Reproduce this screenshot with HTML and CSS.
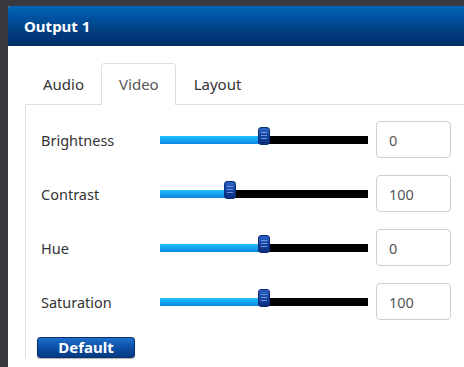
FILE: index.html
```html
<!DOCTYPE html>
<html lang="en">
<head>
    <meta charset="UTF-8">
    <meta name="viewport" content="width=device-width, initial-scale=1.0">
    <title>Output 1</title>
    <link rel="stylesheet" href="styles.css">
</head>
<body>
    <div class="dialog">
        <div class="header">Output 1</div>
        <div class="content">
            <ul class="tabs">
                <li class="tab">Audio</li>
                <li class="tab active">Video</li>
                <li class="tab">Layout</li>
            </ul>
            <div class="panel">
                <div class="row">
                    <label class="name">Brightness</label>
                    <div class="slider">
                        <div class="fill" style="width:104px;"></div>
                        <div class="thumb" style="left:104px;"><span></span><span></span><span></span></div>
                    </div>
                    <input class="value" type="text" value="0">
                </div>
                <div class="row">
                    <label class="name">Contrast</label>
                    <div class="slider">
                        <div class="fill" style="width:70px;"></div>
                        <div class="thumb" style="left:70px;"><span></span><span></span><span></span></div>
                    </div>
                    <input class="value" type="text" value="100">
                </div>
                <div class="row">
                    <label class="name">Hue</label>
                    <div class="slider">
                        <div class="fill" style="width:104px;"></div>
                        <div class="thumb" style="left:104px;"><span></span><span></span><span></span></div>
                    </div>
                    <input class="value" type="text" value="0">
                </div>
                <div class="row">
                    <label class="name">Saturation</label>
                    <div class="slider">
                        <div class="fill" style="width:104px;"></div>
                        <div class="thumb" style="left:104px;"><span></span><span></span><span></span></div>
                    </div>
                    <input class="value" type="text" value="100">
                </div>
                <button class="default">Default</button>
            </div>
        </div>
    </div>
</body>
</html>
```

FILE: styles.css
```css
html, body {
    height: 100%;
}
body {
    margin: 0;
    background-color: #393a3f;
    font-family: "Noto Sans", "Open Sans", sans-serif;
    overflow: hidden;
}
.dialog {
    margin: 6px 0 0 8px;
    height: calc(100% - 6px);
    background: white;
    border-radius: 3px 0 0 0;
    overflow: hidden;
}
.header {
    height: 40px;
    line-height: 40px;
    padding-left: 16px;
    color: white;
    font-size: 15px;
    font-weight: bold;
    background: linear-gradient(#0063b9, #013a7c 70%, #012f68);
}
.content {
    padding: 17px 0 0 17px;
}
.tabs {
    display: flex;
    list-style: none;
    margin: 0;
    padding: 0;
}
.tab {
    height: 40px;
    line-height: 40px;
    padding: 0 16px 0 17px;
    font-size: 15px;
    color: #333;
    border: 1px solid transparent;
    border-bottom: none;
    margin-bottom: -1px;
}
.tab.active {
    border-color: #dedede;
    border-radius: 4px 4px 0 0;
    background: white;
    color: #555;
    height: 41px;
    position: relative;
}
.panel {
    border-top: 1px solid #dedede;
    border-left: 1px solid #dedede;
    padding: 16px 0 0 15px;
}
.row {
    display: flex;
    align-items: center;
    height: 37px;
    margin-bottom: 17px;
}
.name {
    width: 119px;
    font-size: 14.5px;
    color: #333;
}
.slider {
    position: relative;
    width: 208px;
    height: 8px;
    background: black;
}
.fill {
    height: 8px;
    background: linear-gradient(#22c0ff, #0a86e0);
}
.thumb {
    position: absolute;
    top: -9px;
    margin-left: -6px;
    width: 12px;
    height: 18px;
    box-sizing: border-box;
    border-radius: 3px;
    border: 1px solid #0b2a72;
    background: linear-gradient(#2a63c8, #123f9a 60%, #0c2e7a);
    display: flex;
    flex-direction: column;
    justify-content: center;
    align-items: center;
    gap: 2px;
}
.thumb span {
    width: 6px;
    height: 1px;
    background: #6f95d8;
}
.value {
    margin-left: 8px;
    width: 75px;
    height: 37px;
    box-sizing: border-box;
    border: 1px solid #cfcfcf;
    border-radius: 4px;
    padding: 0 12px;
    font-family: "Noto Sans", "Open Sans", sans-serif;
    font-size: 14.5px;
    color: #555;
}
.default {
    display: block;
    margin: 0 0 0 -4px;
    width: 98px;
    height: 21px;
    padding: 0;
    border: 1px solid #07306e;
    border-radius: 3px;
    background: linear-gradient(#1f6fcc, #0b4fa6 50%, #063a82);
    color: white;
    font-family: "Noto Sans", "Open Sans", sans-serif;
    font-size: 15px;
    font-weight: bold;
    line-height: 19px;
    box-shadow: 0 1px 1px rgba(0,0,0,0.3);
}
```
